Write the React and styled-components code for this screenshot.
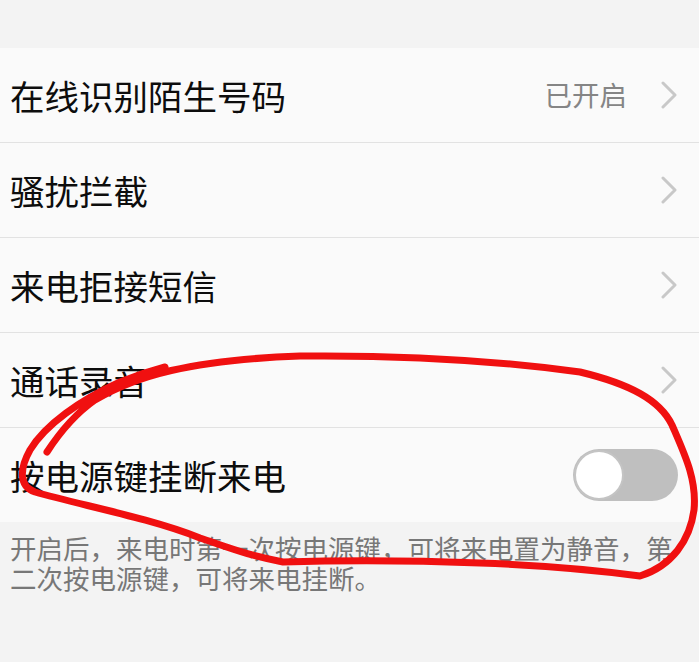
import React from "react";
import styled, { createGlobalStyle } from "styled-components";

const Global = createGlobalStyle`
  html, body { margin: 0; padding: 0; background: #f3f3f3; }
  body { font-family: "Noto Sans CJK SC", "Noto Sans", sans-serif; }
`;

const Page = styled.div`
  position: relative;
  width: 699px;
  height: 662px;
  background: #f3f3f3;
  overflow: hidden;
`;

const TopBand = styled.div`
  height: 48px;
  background: #f3f3f3;
`;

const List = styled.div`
  background: #fafafa;
  display: flex;
  flex-direction: column;
`;

const Row = styled.div`
  height: 94px;
  display: flex;
  align-items: center;
  padding: 0 21px 0 10px;
  border-bottom: ${(p) => (p.$last ? "none" : "1px solid #e2e2e2")};
  box-sizing: content-box;
`;

const Title = styled.div`
  flex: 1;
  font-size: 34.5px;
  line-height: 1;
  color: #0d0d0d;
`;

const Value = styled.div`
  font-size: 27.5px;
  color: #858585;
  margin-right: 33px;
  line-height: 1;
`;

const Chevron = styled.svg`
  width: 18px;
  height: 28px;
  display: block;
`;

const Toggle = styled.div`
  width: 105px;
  height: 52px;
  border-radius: 26px;
  background: #bfbfbf;
  display: flex;
  align-items: center;
`;

const Knob = styled.div`
  width: 46px;
  height: 46px;
  border-radius: 50%;
  background: #fff;
  border: 2px solid #c4c4c4;
  margin-left: 1px;
`;

const Note = styled.div`
  padding: 11px 16px 0 10px;
  font-size: 26.5px;
  line-height: 30px;
  color: #777;
`;

const Scribble = styled.svg`
  position: absolute;
  left: 0;
  top: 0;
  width: 699px;
  height: 662px;
  pointer-events: none;
`;

const ChevronIcon = () => (
  <Chevron viewBox="0 0 18 28">
    <polyline
      points="3,2 15,14 3,26"
      fill="none"
      stroke="#c8c8c8"
      strokeWidth="3"
      strokeLinecap="round"
      strokeLinejoin="round"
    />
  </Chevron>
);

const rows = [
  { title: "在线识别陌生号码", value: "已开启", chevron: true },
  { title: "骚扰拦截", chevron: true },
  { title: "来电拒接短信", chevron: true },
  { title: "通话录音", chevron: true },
  { title: "按电源键挂断来电", toggle: true },
];

export default function App() {
  return (
    <>
      <Global />
      <Page>
        <TopBand />
        <List>
          {rows.map((r, i) => (
            <Row key={r.title} $last={i === rows.length - 1}>
              <Title>{r.title}</Title>
              {r.value && <Value>{r.value}</Value>}
              {r.chevron && <ChevronIcon />}
              {r.toggle && (
                <Toggle>
                  <Knob />
                </Toggle>
              )}
            </Row>
          ))}
        </List>
        <Note>开启后，来电时第一次按电源键，可将来电置为静音，第二次按电源键，可将来电挂断。</Note>
        <Scribble viewBox="0 0 699 662">
          <path
            d="M47,452 C60,432 75,414 95,400 C135,376 190,360 300,356 C400,355 500,361 580,372 C630,384 660,400 672,425 C685,455 697,480 694,510 C690,540 672,566 640,576 C610,572 560,566 480,563 C400,560 320,561 283,562 C250,556 230,548 200,538 C150,518 80,505 35,492 C18,486 20,468 30,450 C45,425 80,400 120,382 C135,376 150,371 165,367"
            fill="none"
            stroke="#f01010"
            strokeWidth="7"
            strokeLinecap="round"
            strokeLinejoin="round"
          />
        </Scribble>
      </Page>
    </>
  );
}
